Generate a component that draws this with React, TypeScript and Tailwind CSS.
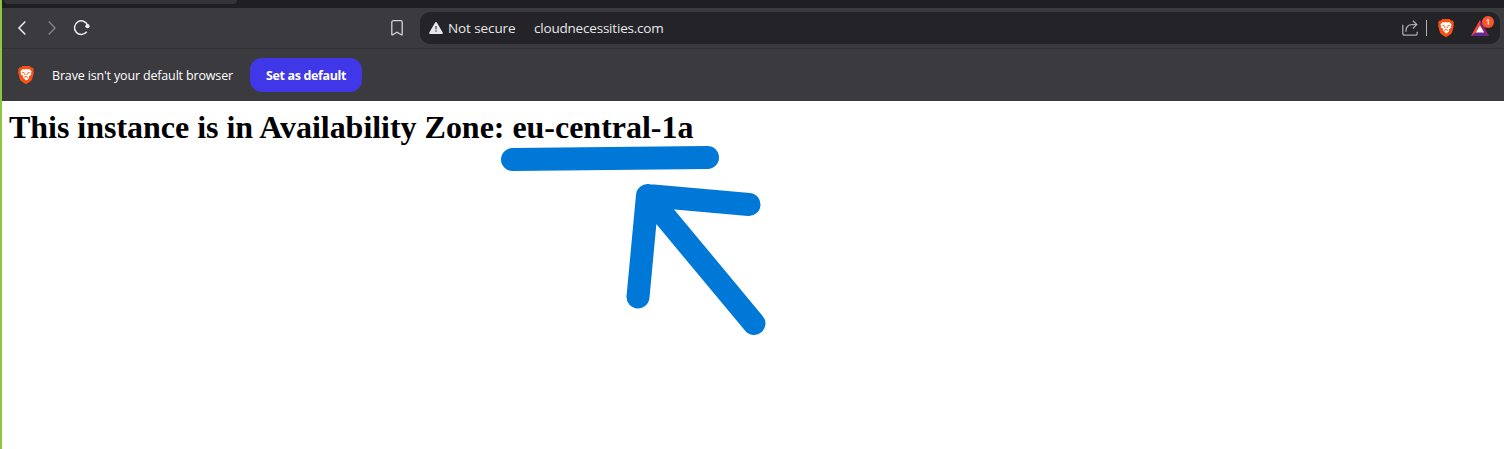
import React from "react";

function BraveLion({ className }: { className: string }) {
  return (
    <svg className={className} viewBox="0 0 16 18" fill="none" aria-hidden="true">
      <path
        d="M4.5 0h7l1.5 1.6 1.5-.2 1.4 2-.5 1.6.5 1.6-1.8 6.6c-.3 1-.9 1.8-1.8 2.4L8.700 17.800a1.200 1.200 0 0 1-1.400 0l-3.600-2.200c-.9-.6-1.500-1.400-1.800-2.400L.1 6.600.6 5 .1 3.400l1.400-2 1.500.2z"
        fill="#fb5014"
      />
      <path
        d="M4.700 3.100 6.500 3.400 8 2.900l1.500.5 1.800-.3 2.200 2.500-.5 1.400.2 1.400-2.300 2.200.2 1.600-1.700 1.600L8 14.500l-1.400-1.600-1.700-1.600.2-1.600L2.800 8.400 3 7l-.5-1.400z"
        fill="#fff"
      />
      <path
        d="M4.300 6.500 6.600 7M11.700 6.500 9.400 7M7 7.600 6.800 9M9 7.600 9.200 9M6.200 11.400 8 10.500l1.800.9"
        stroke="#fb5014"
        strokeWidth="1"
      />
    </svg>
  );
}

function Toolbar() {
  return (
    <div className="flex h-10 items-center bg-[#3b3a3f] pr-1">
      <svg className="h-10 w-[100px] shrink-0" viewBox="2 8 100 40" fill="none" aria-hidden="true">
        <path d="M25.300 21.500 19 28l6.300 6.500" stroke="#ececef" strokeWidth="1.500" />
        <path d="M48.700 21.500 55 28l-6.300 6.500" stroke="#858489" strokeWidth="1.400" />
        <path d="M86.700 31.800A6.800 6.800 0 1 1 87.700 25.300" stroke="#ececef" strokeWidth="1.500" />
        <circle cx="87.500" cy="26.200" r="2.100" fill="#ececef" />
      </svg>
      <svg className="ml-[289px] h-4 w-3 shrink-0" viewBox="0 0 12 16" fill="none" aria-hidden="true">
        <path
          d="M.8 2.200A1.500 1.500 0 0 1 2.300.7h7.400a1.500 1.500 0 0 1 1.500 1.500v12.200c0 .5-.5.7-.9.4L6 12.200l-4.300 2.600c-.4.300-.9.100-.9-.4z"
          stroke="#d2d2d6"
          strokeWidth="1.300"
        />
      </svg>
      <div className="ml-[17px] flex h-8 flex-1 items-center rounded-[10px] bg-[#242328] pl-[9px] pr-1.5 font-['Open_Sans',sans-serif] text-[13.5px] text-[#e7e7ea]">
        <svg className="h-3 w-3.5 shrink-0" viewBox="0 0 14 12" aria-hidden="true">
          <path d="M6 .7a1.100 1.100 0 0 1 2 0l5.700 9.700A1.100 1.100 0 0 1 12.700 12H1.300a1.100 1.100 0 0 1-1-1.600z" fill="#e7e7ea" />
          <path d="M6.300 4h1.400v3.400H6.300zM6.300 8.400h1.400v1.400H6.300z" fill="#55545a" />
        </svg>
        <span className="ml-[5px] w-[86px] whitespace-nowrap tracking-[-0.100px]">Not secure</span>
        <span className="whitespace-nowrap tracking-[-0.200px]">cloudnecessities.com</span>
        <svg className="ml-auto h-4 w-4 shrink-0" viewBox="0 0 16 16" fill="none" stroke="#aaa9af" strokeWidth="1.300" aria-hidden="true">
          <path d="M.8 4.800v8.500c0 1.100.7 1.900 1.900 1.900h10.600c1.200 0 1.900-.8 1.900-1.900v-1.500" />
          <path d="M4 11.800V10.500C4 7 6.500 4.600 9.800 4.600h4.400M10.800.8l4 3.800-4 3.900" />
        </svg>
        <div className="ml-2 h-4 w-px bg-[#b5b4b9]" />
        <BraveLion className="ml-[11px] h-[18px] w-4 shrink-0" />
        <div className="relative ml-[17px] h-6 w-[23px] shrink-0">
          <svg className="h-5 w-[23px]" viewBox="0 0 23 20" aria-hidden="true">
            <path d="M9 4 0 20h18z" fill="#662d91" />
            <path d="m9 4 9 16-4.500-3.500L9 9z" fill="#9e1f63" />
            <path d="M9 4 0 20l4.700-3.500L9 9z" fill="#ff4724" />
            <path d="m9 9.500 4.200 7H4.800z" fill="#fff" />
          </svg>
          <span className="absolute left-[11px] top-0 flex h-3 w-3 items-center justify-center rounded-full bg-[#fb542b] text-[8px] font-semibold leading-none text-white">1</span>
        </div>
      </div>
    </div>
  );
}

function DefaultBrowserBar() {
  return (
    <div className="flex h-[53px] items-center border-t border-[#323136] bg-[#3b3a3f] pl-4 font-['Open_Sans',sans-serif] text-[12.5px] text-white">
      <BraveLion className="h-[18px] w-4 shrink-0" />
      <span className="ml-[18px] w-[198px] whitespace-nowrap pt-[2px] tracking-[-0.160px]">Brave isn't your default browser</span>
      <button className="h-[34px] w-28 rounded-xl bg-[#4038e8] pt-[2px] text-[12.5px] font-bold tracking-[-0.350px] text-white">
        Set as default
      </button>
    </div>
  );
}

export default function App() {
  return (
    <div className="relative flex h-[449px] w-[1504px] flex-col overflow-hidden border-l-2 border-[#8dc63f] bg-white">
      <div className="h-2 bg-[#1f1e23] pl-[2px]">
        <div className="h-1 w-[233px] rounded-b-[4px] bg-[#343338]" />
      </div>
      <Toolbar />
      <DefaultBrowserBar />
      <main className="px-[7px] pt-2">
        <h1 className="whitespace-nowrap font-['Liberation_Serif',serif] text-[32px] font-bold leading-[37px] tracking-[-0.025px] text-black">
          This instance is in Availability Zone: eu-central-1a
        </h1>
      </main>
      <svg
        className="absolute left-[488px] top-[140px]"
        width="290"
        height="205"
        viewBox="490 140 290 205"
        fill="none"
        stroke="#0078d7"
        strokeWidth="23"
        strokeLinecap="round"
        strokeLinejoin="round"
        aria-hidden="true"
      >
        <path d="M512.500 159.500 707.500 157.500" />
        <path d="M638 297 647.500 195.500 749 204.500M647.500 195.500 754 323.500" />
      </svg>
    </div>
  );
}
